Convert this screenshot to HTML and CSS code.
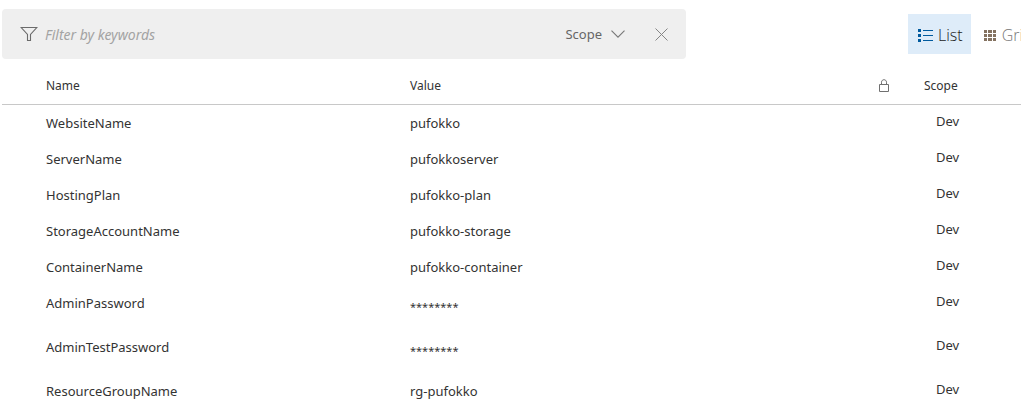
FILE: index.html
```html
<!DOCTYPE html>
<html lang="en">
<head>
<meta charset="utf-8">
<title>Variables</title>
<link rel="stylesheet" href="styles.css">
</head>
<body>
<main class="page">
  <div class="toolbar">
    <form class="filter" role="search">
      <svg class="funnel" width="18" height="16" viewBox="0 0 18 16" fill="none" stroke="#6b6b6b" stroke-width="1.1"><path d="M1.2 1.5H16.8L10.5 8.5V14.5H7.5V8.5Z"/></svg>
      <input class="keywords" type="text" placeholder="Filter by keywords" aria-label="Filter by keywords">
      <button class="scope" type="button">Scope
        <svg width="14" height="8" viewBox="0 0 14 8" fill="none" stroke="#777" stroke-width="1.1"><path d="M.5 .7L7 7.2L13.5 .7"/></svg>
      </button>
      <button class="clear" type="button" aria-label="Clear filter">
        <svg width="13" height="13" viewBox="0 0 13 13" fill="none" stroke="#858585" stroke-width="1"><path d="M.5 .5L12.5 12.5M12.5 .5L.5 12.5"/></svg>
      </button>
    </form>
    <div class="views">
      <button class="view active" type="button" aria-pressed="true">
        <svg width="15" height="13" viewBox="0 0 15 13" fill="#005a9e" shape-rendering="crispEdges"><path d="M0 0h3v3H0zM0 5h3v3H0zM0 10h3v3H0zM5 1h10v1H5zM5 6h10v1H5zM5 11h10v1H5z"/></svg>
        List
      </button>
      <button class="view" type="button" aria-pressed="false">
        <svg width="12" height="11" viewBox="0 0 12 11" fill="#847260" shape-rendering="crispEdges"><path d="M0 0h3v3H0zM4 0h4v3H4zM9 0h3v3H9zM0 4h3v3H0zM4 4h4v3H4zM9 4h3v3H9zM0 8h3v3H0zM4 8h4v3H4zM9 8h3v3H9z"/></svg>
        Grid
      </button>
    </div>
  </div>
  <table class="variables">
    <colgroup><col class="col-name"><col class="col-value"><col class="col-lock"><col class="col-scope"></colgroup>
    <thead>
      <tr>
        <th class="name">Name</th>
        <th>Value</th>
        <th class="lock"><svg width="12" height="13" viewBox="0 0 12 13" fill="none" stroke="#707070" role="img" aria-label="Locked"><path d="M1.5 5.5H10.5V12.5H1.5ZM3.5 5.5V3.2C3.5 -.1 8.5 -.1 8.5 3.2V5.5"/></svg></th>
        <th>Scope</th>
      </tr>
    </thead>
    <tbody>
      <tr><td class="name">WebsiteName</td><td>pufokko</td><td></td><td class="env">Dev</td></tr>
      <tr><td class="name">ServerName</td><td>pufokkoserver</td><td></td><td class="env">Dev</td></tr>
      <tr><td class="name">HostingPlan</td><td>pufokko-plan</td><td></td><td class="env">Dev</td></tr>
      <tr><td class="name">StorageAccountName</td><td>pufokko-storage</td><td></td><td class="env">Dev</td></tr>
      <tr><td class="name">ContainerName</td><td>pufokko-container</td><td></td><td class="env">Dev</td></tr>
      <tr class="tall"><td class="name">AdminPassword</td><td class="secret">********</td><td></td><td class="env">Dev</td></tr>
      <tr class="tall"><td class="name">AdminTestPassword</td><td class="secret">********</td><td></td><td class="env">Dev</td></tr>
      <tr><td class="name">ResourceGroupName</td><td>rg-pufokko</td><td></td><td class="env">Dev</td></tr>
    </tbody>
  </table>
</main>
</body>
</html>
```

FILE: styles.css
```css
* { box-sizing: border-box; }
body {
  margin: 0;
  background: #fff;
  color: #333;
  font: 13px/20px "Segoe UI", "Noto Sans", "Open Sans", sans-serif;
}
button, input { font: inherit; color: inherit; border: 0; background: none; padding: 0; margin: 0; }
svg { display: block; flex: none; }
.page { padding: 9px 0 0 2px; overflow: hidden; }
.toolbar { display: flex; align-items: center; gap: 222px; }
.filter {
  display: flex;
  flex: 1;
  align-items: center;
  min-width: 0;
  height: 50px;
  padding: 0 18px;
  border-radius: 4px;
  background: #efefef;
}
.keywords { flex: 1; min-width: 0; margin: 2px 0 0 7px; outline: 0; font-size: 14px; }
.keywords::placeholder { color: #a3a3a3; font-style: italic; opacity: 1; }
.scope { display: flex; align-items: center; gap: 9px; color: #666; }
.clear { margin-left: 30px; }
.views { display: flex; flex: none; width: 113px; overflow: hidden; }
.view {
  display: flex;
  flex: none;
  align-items: center;
  gap: 6px;
  height: 40px;
  padding: 2px 8px 0 10px;
  color: #767676;
  font-family: "Segoe UI", "Open Sans", "Noto Sans", sans-serif;
  font-size: 16px;
  font-weight: 300;
  white-space: nowrap;
}
.view + .view { padding-left: 13px; }
.view.active { gap: 5px; background: #deecf9; color: #212121; }
.variables { width: 100%; margin-top: 8px; border-collapse: collapse; table-layout: fixed; }
.col-name { width: 408px; }
.col-lock { width: 46px; }
.col-scope { width: 97px; }
th, td { padding: 0; text-align: left; vertical-align: top; }
th { padding: 9px 0 8px; border-bottom: 1px solid #c8c8c8; font-size: 12px; font-weight: 400; }
td { padding: 8px 0; }
.tall td { padding-bottom: 16px; }
.name { padding-left: 44px; }
th.lock { padding-top: 12px; }
td.env { padding: 6px 0 0 12px; }
.tall td.secret { padding: 12px 0 0; font-size: 11px; }
```
